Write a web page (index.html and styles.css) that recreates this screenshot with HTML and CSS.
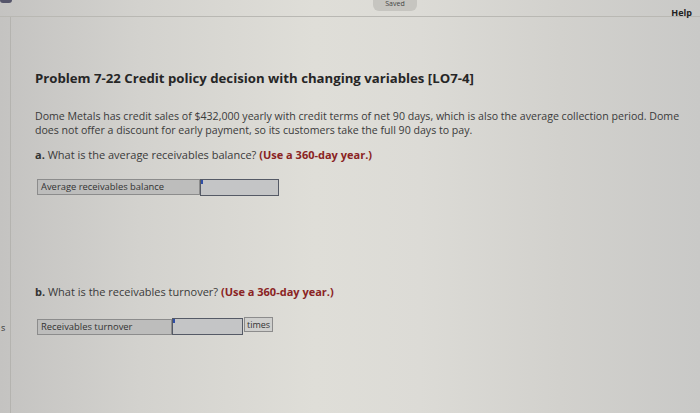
FILE: index.html
```html
<!DOCTYPE html>
<html>
<head>
<meta charset="utf-8">
<link rel="stylesheet" href="styles.css">
</head>
<body>
<div class="screen">
  <header class="topbar">
    <span class="corner"></span>
    <span class="saved">Saved</span>
    <span class="help">Help</span>
  </header>
  <div class="body">
    <aside class="rail"><span class="rail-s">s</span></aside>
    <main class="content">
      <h1 class="title">Problem 7-22 Credit policy decision with changing variables [LO7-4]</h1>
      <p class="intro">Dome Metals has credit sales of $432,000 yearly with credit terms of net 90 days, which is also the average collection period. Dome does not offer a discount for early payment, so its customers take the full 90 days to pay.</p>
      <p class="q"><b>a.</b> What is the average receivables balance? <span class="hint">(Use a 360-day year.)</span></p>
      <div class="row row-a">
        <span class="lbl lbl-a">Average receivables balance</span>
        <span class="inp inp-a"></span>
      </div>
      <p class="q q-b"><b>b.</b> What is the receivables turnover? <span class="hint">(Use a 360-day year.)</span></p>
      <div class="row row-b">
        <span class="lbl lbl-b">Receivables turnover</span>
        <span class="inp inp-b"></span>
        <span class="unit">times</span>
      </div>
    </main>
  </div>
</div>
</body>
</html>
```
FILE: styles.css
```css
html, body { margin: 0; padding: 0; }
body {
  width: 700px; height: 413px; overflow: hidden;
  font-family: "Open Sans", Lato, sans-serif;
  color: #2e2e2e;
}
.screen {
  width: 700px; height: 413px;
  background: linear-gradient(90deg, #c4c3c1 0%, #d3d2ce 20%, #dfded8 45%, #dcdbd6 60%, #d2d1cd 80%, #c9c9c7 100%);
  display: flex; flex-direction: column;
}
.topbar {
  height: 16px; border-bottom: 1px solid #b9b8b3;
  display: flex; align-items: flex-start; position: relative;
}
.corner {
  position: absolute; left: 0; top: 0; width: 12px; height: 3px;
  background: #55556a; border-radius: 0 0 6px 6px;
}
.saved {
  margin-left: 373px; width: 44px; height: 11px;
  background: #c6c5c0; border-radius: 0 0 6px 6px;
  font-size: 7px; color: #444; text-align: center; line-height: 8px;
}
.help {
  margin-left: auto; margin-right: 8px; margin-top: 7px;
  font-size: 9px; font-weight: 700; color: #222; line-height: 11px;
}
.body { flex: 1; display: flex; }
.rail { width: 10px; border-right: 1px solid #b4b3af; position: relative; }
.rail-s { position: absolute; left: 1px; top: 304px; font-size: 9px; color: #333; }
.content { flex: 1; padding-left: 24px; }
.title {
  margin: 53px 0 0; font-size: 13.2px; line-height: 16px; font-weight: 700; color: #262626;
}
.intro {
  margin: 23px 0 0; font-size: 10.6px; line-height: 14px; color: #3a3a3a; width: 650px;
}
.q { margin: 11px 0 0; font-size: 11px; line-height: 14px; color: #3a3a3a; }
.q b { color: #333; }
.hint { color: #8a2323; font-weight: 700; }
.row { display: flex; align-items: flex-start; }
.row-a { margin-top: 17px; margin-left: 2px; }
.row-b { margin-top: 18px; margin-left: 2px; }
.q-b { margin-top: 89px; }
.lbl {
  height: 16px; box-sizing: border-box; background: #bdbdbc; border: 1px solid #8c8c8c;
  font-size: 9.4px; color: #333; padding-left: 3px; line-height: 14px;
}
.lbl-a { width: 163px; }
.lbl-b { width: 135px; margin-top: 2px; }
.inp {
  height: 17px; box-sizing: border-box; border: 1px solid #555a66; background: #c4c5c6;
  position: relative;
}
.inp::before {
  content: ""; position: absolute; left: 0; top: 0; width: 2px; height: 4px; background: #2f4fa8;
}
.inp-a { width: 79px; }
.inp-b { width: 71px; margin-top: 1px; }
.unit {
  margin-left: 1px; height: 15px; box-sizing: border-box; border: 1px solid #8c8c8c;
  background: #cfcfcd; font-size: 9px; padding: 0 2px; line-height: 13px; color: #333;
}
```
